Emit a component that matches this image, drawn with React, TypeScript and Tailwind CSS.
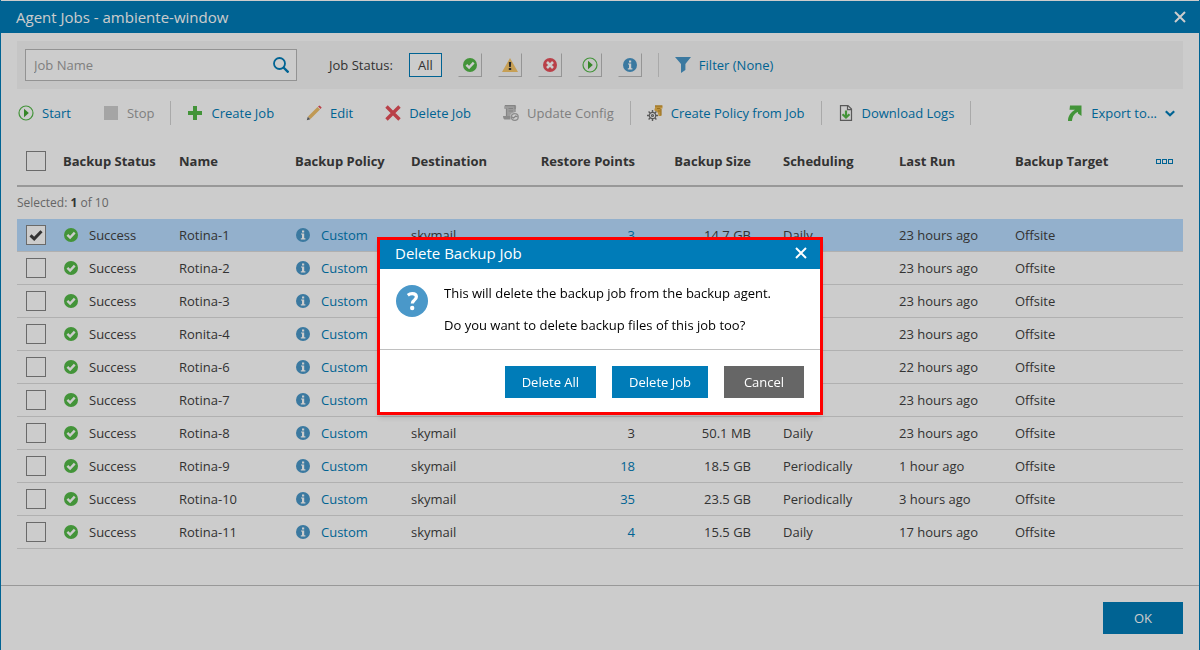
import { useState, type ReactNode } from "react";

type Job = {
  name: string;
  destination?: string;
  points?: number;
  pointsLink?: boolean;
  size?: string;
  scheduling?: string;
  lastRun: string;
};

const jobs: Job[] = [
  { name: "Rotina-1", destination: "skymail", points: 3, pointsLink: true, size: "14.7 GB", scheduling: "Daily", lastRun: "23 hours ago" },
  { name: "Rotina-2", lastRun: "23 hours ago" },
  { name: "Rotina-3", lastRun: "23 hours ago" },
  { name: "Ronita-4", lastRun: "23 hours ago" },
  { name: "Rotina-6", lastRun: "22 hours ago" },
  { name: "Rotina-7", lastRun: "23 hours ago" },
  { name: "Rotina-8", destination: "skymail", points: 3, size: "50.1 MB", scheduling: "Daily", lastRun: "23 hours ago" },
  { name: "Rotina-9", destination: "skymail", points: 18, pointsLink: true, size: "18.5 GB", scheduling: "Periodically", lastRun: "1 hour ago" },
  { name: "Rotina-10", destination: "skymail", points: 35, pointsLink: true, size: "23.5 GB", scheduling: "Periodically", lastRun: "3 hours ago" },
  { name: "Rotina-11", destination: "skymail", points: 4, pointsLink: true, size: "15.5 GB", scheduling: "Daily", lastRun: "17 hours ago" },
];

function SuccessIcon() {
  return (
    <svg width="14" height="14" viewBox="0 0 14 14" className="shrink-0">
      <circle cx="7" cy="7" r="7" fill="#54b948" />
      <path d="M3.4 6.8l2.7 2.8 4.6-5" fill="none" stroke="#fff" strokeWidth="2.4" />
    </svg>
  );
}

function WarningIcon() {
  return (
    <svg width="16" height="14" viewBox="0 0 16 14">
      <path d="M8 0l8 14H0z" fill="#f8c76b" />
      <path d="M6.800 4h2.400l-.4 5H7.200zM6.800 10h2.400v2H6.800z" fill="#333" />
    </svg>
  );
}

function ErrorIcon() {
  return (
    <svg width="14" height="14" viewBox="0 0 14 14">
      <circle cx="7" cy="7" r="7" fill="#e8505b" />
      <path d="M4 4l6 6M10 4l-6 6" stroke="#fff" strokeWidth="2.6" />
    </svg>
  );
}

function PlayIcon() {
  return (
    <svg width="16" height="16" viewBox="0 0 16 16">
      <circle cx="8" cy="8" r="7" fill="none" stroke="#54b948" strokeWidth="1.2" />
      <path d="M6 3.8L10.8 8 6 12.2z" fill="#44a832" />
    </svg>
  );
}

function InfoIcon() {
  return (
    <svg width="14" height="14" viewBox="0 0 14 14" className="shrink-0">
      <circle cx="7" cy="7" r="7" fill="#4a98c9" />
      <path d="M6 2.4h2.2v2H6zM5 5.4h3.2v4.800h1.200v1.300H4.800v-1.300H6V6.600H5z" fill="#fff" />
    </svg>
  );
}

function SearchIcon() {
  return (
    <svg width="16" height="16" viewBox="0 0 16 16" fill="none" stroke="#007cb8">
      <circle cx="6.500" cy="6.500" r="5.500" strokeWidth="1.800" />
      <path d="M10.500 10.500l5 5" strokeWidth="2.400" />
    </svg>
  );
}

function FilterIcon() {
  return (
    <svg width="16" height="16" viewBox="0 0 16 16">
      <path d="M0 0h16l-5.600 7v6L6 16V7z" fill="#4a98c9" />
    </svg>
  );
}

function StopIcon() {
  return (
    <svg width="16" height="16" viewBox="0 0 16 16">
      <path d="M1 1h14v14H1z" fill="#cfcfcf" />
    </svg>
  );
}

function PlusIcon() {
  return (
    <svg width="16" height="16" viewBox="0 0 16 16">
      <path d="M6 1h4v5h5v4h-5v5H6v-5H1V6h5z" fill="#54b948" />
    </svg>
  );
}

function PencilIcon() {
  return (
    <svg width="16" height="16" viewBox="0 0 16 16">
      <path d="M2 11.500L11.500 2 14 4.500 4.500 14z" fill="#f0c06a" />
      <path d="M12 1.500L13.500.400l2.200 2.200-1.200 1.500z" fill="#e8505b" />
      <path d="M1.800 11.800l2.500 2.500L.800 15.300z" fill="#666" />
    </svg>
  );
}

function CrossIcon() {
  return (
    <svg width="16" height="16" viewBox="0 0 16 16">
      <path d="M1.500 1.500l13 13M14.500 1.500l-13 13" stroke="#e8505b" strokeWidth="3.400" />
    </svg>
  );
}

function ConfigIcon() {
  return (
    <svg width="16" height="16" viewBox="0 0 16 16" fill="none">
      <path d="M2 0h10.500C13.500.500 13 2 13 4h-1.500v3.500C8.500 7.500 7 9.500 7.500 11H3V4H1.500C1 2.500 1 1 2 0z" fill="#c4c4c4" />
      <path d="M2 .700h10.200M3.500 11V3.500M12 1v6M5.500 3.500h4.500M5.500 6h4.500" stroke="#a6a6a6" strokeWidth="1.200" />
      <path d="M0 11h7.500v3.500H1.500C.500 14 0 12.500 0 11z" fill="#adadad" />
      <circle cx="11.800" cy="12" r="3.400" stroke="#b0b0b0" strokeWidth="1.300" />
      <path d="M9 12l1.600 1 2.200-2 1.800 1" stroke="#a6a6a6" strokeWidth="1.300" />
    </svg>
  );
}

function PolicyIcon() {
  return (
    <svg width="16" height="16" viewBox="0 0 16 16" fill="none">
      <path d="M8 .500h7.500v3h-1.300v7.500H11.500C11.500 8 10 6 7.500 5.500V3.500H8z" fill="#e9b44c" />
      <path d="M8 1h7.200M10 3.500h3M11 6h2.200M14 4v6.500" stroke="#bf8a26" />
      <g stroke="#707070">
        <path
          d="M5.500 5v2M5.500 14v2M0 10.500h2M9 10.500h2M1.600 6.600L3 8M8 13l1.400 1.400M1.600 14.400L3 13M8 8l1.400-1.400"
          strokeWidth="1.400"
        />
        <circle cx="5.500" cy="10.500" r="3.200" strokeWidth="1.200" />
        <circle cx="5.500" cy="10.500" r="1" strokeWidth="1.200" />
      </g>
    </svg>
  );
}

function DownloadIcon() {
  return (
    <svg width="16" height="16" viewBox="0 0 16 16" fill="none">
      <path d="M2.500.600h7.500l3.500 3.500v11.300h-11zM9.500.600v4h4" stroke="#707070" strokeWidth="1.200" />
      <path d="M8 5.500v6M4.500 9.300L8 12.500l3.500-3.200" stroke="#54b948" strokeWidth="2.200" />
    </svg>
  );
}

function ExportIcon() {
  return (
    <svg width="16" height="16" viewBox="0 0 16 16">
      <path d="M3 .500h11.500V11L11 8.500V7C7.500 8.500 5.500 11 5 16H1c0-5.500 3-9 7-11.300H2.500z" fill="#54b948" />
    </svg>
  );
}

function ChevronIcon() {
  return (
    <svg width="10" height="7" viewBox="0 0 10 7" fill="none">
      <path d="M.800 1.200L5 5.200l4.200-4" stroke="#007cb8" strokeWidth="2.200" />
    </svg>
  );
}

function CloseIcon() {
  return (
    <svg width="12" height="12" viewBox="0 0 12 12">
      <path d="M1 1l10 10M11 1L1 11" stroke="#fff" strokeWidth="2" />
    </svg>
  );
}

function QuestionIcon() {
  return (
    <svg width="32" height="32" viewBox="0 0 32 32" fill="none" className="shrink-0">
      <circle cx="16" cy="16" r="16" fill="#4a98c9" />
      <path
        d="M11.800 10.200c1.300-1 2.700-1.500 4.400-1.500 2.700 0 4.200 1.200 4.200 3.100 0 1.500-.8 2.500-2.200 3.500-1.500 1-1.900 1.700-1.900 3.300"
        stroke="#fff"
        strokeWidth="3.200"
      />
      <circle cx="16.200" cy="23" r="2.200" fill="#fff" />
    </svg>
  );
}

function Checkbox({ label, checked, onChange }: { label: string; checked: boolean; onChange: () => void }) {
  return (
    <span className="relative block w-5 h-5">
      <input
        type="checkbox"
        aria-label={label}
        checked={checked}
        onChange={onChange}
        className="block w-5 h-5 appearance-none border border-[#858585] bg-white"
      />
      {checked && (
        <svg viewBox="0 0 20 20" className="absolute inset-0 pointer-events-none" fill="none">
          <path d="M4.500 10.300l3.700 3.500 7.300-7.600" stroke="#404040" strokeWidth="3" />
        </svg>
      )}
    </span>
  );
}

function StatusButton({ label, children }: { label: string; children: ReactNode }) {
  return (
    <button
      aria-label={label}
      className="flex items-center justify-center w-6 h-6 border border-t-transparent border-l-transparent border-r-[#bbb] border-b-[#bbb]"
    >
      {children}
    </button>
  );
}

function ToolButton({ icon, disabled, children }: { icon: ReactNode; disabled?: boolean; children: ReactNode }) {
  return (
    <button
      disabled={disabled}
      className="flex items-center gap-2 whitespace-nowrap text-[#007cb8] disabled:text-[#a0a0a0]"
    >
      {icon}
      {children}
    </button>
  );
}

function Separator() {
  return <div className="w-px h-6 bg-[#d4d4d4]" />;
}

function DeleteDialog() {
  return (
    <div className="fixed inset-0 flex items-center justify-center pt-0.5 bg-black/20">
      <div
        role="dialog"
        aria-labelledby="dialog-title"
        className="w-[446px] bg-white border-3 border-[#ff0000] text-black shadow-md"
      >
        <div className="flex items-center justify-between h-[29px] pl-[15px] pr-[13px] pb-[3px] bg-[#007cb8] text-white">
          <h2 id="dialog-title" className="text-[15px] leading-5">Delete Backup Job</h2>
          <button aria-label="Close dialog"><CloseIcon /></button>
        </div>
        <div className="flex gap-4 p-4">
          <QuestionIcon />
          <div className="leading-4">
            <p>This will delete the backup job from the backup agent.</p>
            <p className="mt-4">Do you want to delete backup files of this job too?</p>
          </div>
        </div>
        <div className="flex justify-end gap-4 px-4 pt-4 pb-[14px] border-t border-[#c0c0c0] text-white">
          <button className="h-8 px-[17px] bg-[#007cb8]">Delete All</button>
          <button className="h-8 px-[17px] bg-[#007cb8]">Delete Job</button>
          <button className="h-8 min-w-20 bg-[#666]">Cancel</button>
        </div>
      </div>
    </div>
  );
}

export default function App() {
  const [selected, setSelected] = useState<string[]>(["Rotina-1"]);

  const toggle = (name: string) =>
    setSelected(selected.includes(name) ? selected.filter((n) => n !== name) : [...selected, name]);

  const toggleAll = () => setSelected(selected.length === jobs.length ? [] : jobs.map((j) => j.name));

  return (
    <div className="font-['Open_Sans',sans-serif] text-[13px] leading-5 text-[#404040]">
      <div className="flex flex-col min-h-screen bg-white border-x border-[#007cb8]">
        <header className="flex items-center justify-between h-[33px] pl-[15px] pr-[13px] border-t border-white bg-[#007cb8] text-white">
          <h1 className="text-[15px]">Agent Jobs - ambiente-window</h1>
          <button aria-label="Close window"><CloseIcon /></button>
        </header>

        <main className="flex-1 px-4 pt-2">
          <div className="flex items-center h-12 px-2 bg-[#f7f7f7]">
            <div className="flex items-center w-[272px] h-8 pr-[7px] border border-[#b8b8b8] bg-white">
              <input
                type="text"
                aria-label="Job Name"
                placeholder="Job Name"
                className="flex-1 min-w-0 px-2 outline-none placeholder:text-[#a0a0a0]"
              />
              <button aria-label="Search"><SearchIcon /></button>
            </div>
            <span className="ml-8">Job Status:</span>
            <div className="flex items-center gap-4 ml-4">
              <button className="w-[33px] h-6 border border-[#007cb8] bg-white leading-4">All</button>
              <StatusButton label="Success"><SuccessIcon /></StatusButton>
              <StatusButton label="Warning"><WarningIcon /></StatusButton>
              <StatusButton label="Failed"><ErrorIcon /></StatusButton>
              <StatusButton label="Running"><PlayIcon /></StatusButton>
              <StatusButton label="Info"><InfoIcon /></StatusButton>
              <Separator />
              <ToolButton icon={<FilterIcon />}>Filter (None)</ToolButton>
            </div>
          </div>

          <div className="flex items-center justify-between mt-3 pl-px">
            <div className="flex items-center gap-4">
              <div className="flex gap-8">
                <ToolButton icon={<PlayIcon />}>Start</ToolButton>
                <ToolButton icon={<StopIcon />} disabled>Stop</ToolButton>
              </div>
              <Separator />
              <div className="flex gap-8">
                <ToolButton icon={<PlusIcon />}>Create Job</ToolButton>
                <ToolButton icon={<PencilIcon />}>Edit</ToolButton>
                <ToolButton icon={<CrossIcon />}>Delete Job</ToolButton>
                <ToolButton icon={<ConfigIcon />} disabled>Update Config</ToolButton>
              </div>
              <Separator />
              <ToolButton icon={<PolicyIcon />}>Create Policy from Job</ToolButton>
              <Separator />
              <ToolButton icon={<DownloadIcon />}>Download Logs</ToolButton>
              <Separator />
            </div>
            <div className="pr-2">
              <ToolButton icon={<ExportIcon />}>
                Export to...
                <ChevronIcon />
              </ToolButton>
            </div>
          </div>

          <table className="w-full mt-3 table-fixed border-separate border-spacing-0 text-left">
            <colgroup>
              <col className="w-[38px]" />
              <col className="w-[116px]" />
              <col className="w-[116px]" />
              <col className="w-[116px]" />
              <col className="w-[116px]" />
              <col className="w-[124px]" />
              <col className="w-[116px]" />
              <col className="w-[132px]" />
              <col className="w-[116px]" />
              <col className="w-[116px]" />
              <col className="w-[60px]" />
            </colgroup>
            <thead>
              <tr className="*:h-[50px] *:border-b-2 *:border-[#bfbfbf] whitespace-nowrap">
                <th className="pl-[9px]">
                  <Checkbox label="Select all" checked={selected.length === jobs.length} onChange={toggleAll} />
                </th>
                <th className="px-2">Backup Status</th>
                <th className="px-2">Name</th>
                <th className="px-2">Backup Policy</th>
                <th className="px-2">Destination</th>
                <th className="px-2 text-right">Restore Points</th>
                <th className="px-2 text-right">Backup Size</th>
                <th className="pl-6">Scheduling</th>
                <th className="px-2">Last Run</th>
                <th className="px-2">Backup Target</th>
                <th>
                  <button aria-label="Columns" className="flex gap-px ml-auto mr-[10px]">
                    <span className="w-[5px] h-[5px] border border-[#007cb8]" />
                    <span className="w-[5px] h-[5px] border border-[#007cb8]" />
                    <span className="w-[5px] h-[5px] border border-[#007cb8]" />
                  </button>
                </th>
              </tr>
            </thead>
            <tbody>
              <tr>
                <td colSpan={11} className="h-8 text-xs text-[#808080]">
                  Selected: <b className="text-[#404040]">{selected.length}</b> of {jobs.length}
                </td>
              </tr>
              {jobs.map((job) => (
                <tr
                  key={job.name}
                  className={`*:h-[33px] *:border-b *:border-[#dcdcdc] ${selected.includes(job.name) ? "bg-[#b8ddff]" : ""}`}
                >
                  <td className="pl-[9px]">
                    <Checkbox
                      label={`Select ${job.name}`}
                      checked={selected.includes(job.name)}
                      onChange={() => toggle(job.name)}
                    />
                  </td>
                  <td className="px-2">
                    <div className="flex items-center gap-[11px] pl-px">
                      <SuccessIcon />
                      Success
                    </div>
                  </td>
                  <td className="px-2">{job.name}</td>
                  <td className="px-2">
                    <div className="flex items-center gap-[11px] pl-px">
                      <InfoIcon />
                      <a href="#policy" className="text-[#007cb8]">Custom</a>
                    </div>
                  </td>
                  <td className="px-2">{job.destination}</td>
                  <td className="px-2 text-right">
                    {job.pointsLink ? <a href="#points" className="text-[#007cb8]">{job.points}</a> : job.points}
                  </td>
                  <td className="px-2 text-right">{job.size}</td>
                  <td className="pl-6">{job.scheduling}</td>
                  <td className="px-2">{job.lastRun}</td>
                  <td className="px-2">Offsite</td>
                  <td />
                </tr>
              ))}
            </tbody>
          </table>
        </main>

        <footer className="flex justify-end p-4 border-t border-[#bfbfbf]">
          <button className="w-20 h-8 bg-[#007cb8] text-white">OK</button>
        </footer>
      </div>

      <DeleteDialog />
    </div>
  );
}
